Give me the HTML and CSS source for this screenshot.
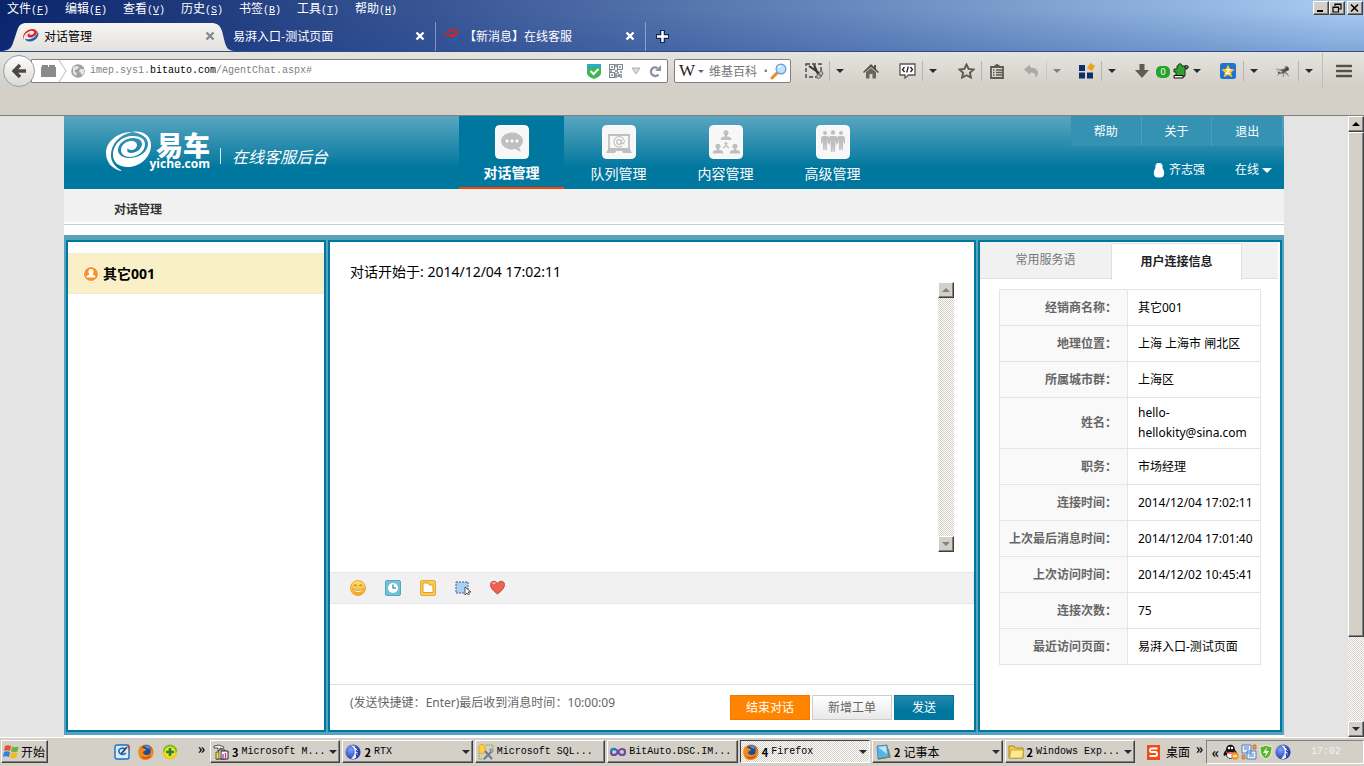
FILE: index.html
```html
<!DOCTYPE html>
<html lang="zh-CN">
<head>
<meta charset="utf-8">
<title>对话管理</title>
<link rel="stylesheet" href="styles.css">
</head>
<body>
<svg class="defs" aria-hidden="true">
  <defs>
    <linearGradient id="gTab" x1="0" y1="0" x2="0" y2="1"><stop offset="0" stop-color="#f6f5f3"/><stop offset="1" stop-color="#e3e1dc"/></linearGradient>
    <linearGradient id="gYel" x1="0" y1="0" x2="0" y2="1"><stop offset="0" stop-color="#ffe27a"/><stop offset="1" stop-color="#f5a91f"/></linearGradient>
    <radialGradient id="gRtx" cx=".35" cy=".35" r=".7"><stop offset="0" stop-color="#7da2f5"/><stop offset="1" stop-color="#1c35a8"/></radialGradient>
    <symbol id="swirl" viewBox="0 0 18 16">
      <path d="M2 13C-1 7 5 1 11 1c4 0 6 3 4 6-2 3-7 4-9 2-1-2 2-5 6-4-3-1-5 1-4 2 1 1 4 0 5-2 0-2-3-3-6-1C3 6 1 9 2 13z" fill="#e02020"/>
      <path d="M3 11c2 2 8 1 11-2 2-2 3-4 2-6 3 3 1 8-3 10-4 2-9 2-10-2z" fill="#1f5fae"/>
    </symbol>
    <symbol id="close" viewBox="0 0 10 10"><path d="M1.5 1.5l7 7M8.500 1.500l-7 7" stroke="currentColor" stroke-width="2.400" fill="none"/></symbol>
    <symbol id="firefox" viewBox="0 0 16 16">
      <circle cx="8" cy="8" r="7.500" fill="#e86a10"/><circle cx="8.500" cy="6.500" r="5.200" fill="#1e4f95"/><path d="M6 2c3-1 6 0 7 3-2-1-3 0-4-1z" fill="#4c9ad8"/>
      <path d="M1 4c0 0 1-1 1-2l2 2c2 0 4 1 4 2l-3 2c0 3 4 4 7 2 1-2 1-4 0-6 3 2 4 6 2 9-3 4-9 4-12 1C0 11 0 7 1 4z" fill="#f08a18"/>
      <path d="M3 12c3 2 7 2 10-1-1 4-7 5-10 1z" fill="#c8330c"/>
    </symbol>
    <symbol id="rtx" viewBox="0 0 16 16"><circle cx="8" cy="8" r="7.600" fill="url(#gRtx)"/><path d="M6 1.500c5 3 5 9 0 13 3 1 4 0 5-1 3-4 2-9-1-11-1-1-3-1-4-1z" fill="#eaf2ff"/><path d="M10 3l3 2-2 2 3 1-3 2 1 3" stroke="#1c35a8" fill="none"/></symbol>
    <symbol id="person" viewBox="0 0 10 10"><circle cx="5" cy="2.500" r="2.300"/><path d="M4 4h2v2c2 0 4 1 4 3H0c0-2 2-3 4-3z"/></symbol>
    <symbol id="stand" viewBox="0 0 8 20"><circle cx="4" cy="2" r="2"/><path d="M1.500 5h5L8 6.500V12l-1 1-.8-4L5.800 19H4.400L4 13l-.4 6H2.200L1.800 9 1 13l-1-1V6.500z"/></symbol>
  </defs>
</svg>

<div class="window">
  <header class="titlebar">
    <nav class="menubar" aria-label="菜单">
      <button class="menu-item">文件<span class="mono">(<u>F</u>)</span></button>
      <button class="menu-item">编辑<span class="mono">(<u>E</u>)</span></button>
      <button class="menu-item">查看<span class="mono">(<u>V</u>)</span></button>
      <button class="menu-item">历史<span class="mono">(<u>S</u>)</span></button>
      <button class="menu-item">书签<span class="mono">(<u>B</u>)</span></button>
      <button class="menu-item">工具<span class="mono">(<u>T</u>)</span></button>
      <button class="menu-item">帮助<span class="mono">(<u>H</u>)</span></button>
      <div class="win-controls">
        <button class="win-btn raised" aria-label="最小化"><svg width="10" height="10" viewBox="0 0 10 10"><path d="M1 8h6" stroke="#000" stroke-width="2"/></svg></button>
        <button class="win-btn raised" aria-label="还原"><svg width="10" height="10" viewBox="0 0 10 10"><path d="M3 3V1h6v5H7M3 1.500h6M1 4h5.500v5H1zM1 4.500h5" fill="none" stroke="#000" stroke-width="1.200"/></svg></button>
        <button class="win-btn raised last" aria-label="关闭"><svg width="10" height="10" viewBox="0 0 10 10"><path d="M1 1.500l7 7M8 1.500l-7 7" stroke="#000" stroke-width="1.600"/></svg></button>
      </div>
    </nav>
    <div class="tabs">
      <div class="tab active">
        <svg class="tab-shape" viewBox="0 0 236 28" preserveAspectRatio="none"><path d="M0 28c8 0 11-2 13-8l4-12c2-6 4-8 10-8h184c6 0 9 2 11 8l3 12c2 6 4 8 11 8z" fill="url(#gTab)"/></svg>
        <svg class="fav" width="17" height="15"><use href="#swirl"/></svg>
        <span class="tab-title">对话管理</span>
        <button class="tab-close" aria-label="关闭标签"><svg width="10" height="10"><use href="#close"/></svg></button>
      </div>
      <div class="tab second">
        <span class="tab-title">易湃入口-测试页面</span>
        <button class="tab-close" aria-label="关闭标签"><svg width="10" height="10"><use href="#close"/></svg></button>
      </div>
      <div class="tab third">
        <svg class="fav" width="17" height="15"><use href="#swirl"/></svg>
        <span class="tab-title">【新消息】在线客服</span>
        <button class="tab-close" aria-label="关闭标签"><svg width="10" height="10"><use href="#close"/></svg></button>
      </div>
      <button class="new-tab" aria-label="新标签"><svg width="13" height="13" viewBox="0 0 13 13"><path d="M6.500 0v13M0 6.500h13" stroke="#13244f" stroke-width="5"/><path d="M6.500 1v11M1 6.500h11" stroke="#fff" stroke-width="2.400"/></svg></button>
    </div>
  </header>

  <div class="toolbar">
    <button class="back" aria-label="后退"><svg width="16" height="16" viewBox="0 0 16 16"><path d="M9 2L3 8l6 6M3 8h12" fill="none" stroke="#4b4a42" stroke-width="3.400"/></svg></button>
    <div class="urlbar">
      <svg width="30" height="22" viewBox="0 0 30 22"><path d="M5 5h6v2H5zM12 5h6v2h-6z" fill="#888"/><path d="M4 7h15v10H4z" fill="#8b8b8b"/><path d="M22 0l7 11-7 11" fill="none" stroke="#c9c9c9" stroke-width="1.200"/></svg>
      <svg class="globe" width="14" height="14" viewBox="0 0 14 14"><circle cx="7" cy="7" r="6.800" fill="#a0a0a0"/><path d="M2 3l4-1 2 1-1 2-3 1v2l2 1-1 3-3-3zM9 5l4 0v4l-2 3-1-3-2-1z" fill="#e4e4e4"/></svg>
      <div class="url" role="textbox" aria-label="地址">imep.sys1.<b>bitauto.com</b>/AgentChat.aspx#</div>
      <svg width="14" height="15" viewBox="0 0 14 15"><path d="M0 0h14v9c0 3-4 5-7 6-3-1-7-3-7-6z" fill="#3fb558"/><path d="M0 0h14v3H0z" fill="#2aa9d6"/><path d="M3.500 7l3 3 5-5" fill="none" stroke="#fff" stroke-width="2"/></svg>
      <svg width="14" height="14" viewBox="0 0 14 14" fill="none" stroke="#7b858f"><path d="M.5.500h5v5h-5zM8.500.500h5v5h-5zM.5 8.500h5v5h-5z" stroke-width="1.200"/><path d="M2 3h2M10 3h2M2 11h2M7 0v3M6 7h3M0 7h3M8 9h2M12 7v2M8 12h3M12 10v4M10 10v2M7 9v5" stroke-width="1.500"/></svg>
      <svg width="10" height="8" viewBox="0 0 10 8"><path d="M1 1h8L5 7z" fill="#d5dade" stroke="#a9b0b8"/></svg>
      <button class="plain" aria-label="刷新"><svg width="12" height="13" viewBox="0 0 12 13"><path d="M9.500 9.500A4.300 4.300 0 1 1 8.500 3" fill="none" stroke="#8b949e" stroke-width="2.400"/><path d="M12 0v6H6z" fill="#8b949e"/></svg></button>
    </div>
    <div class="search">
      <span class="wiki">W</span><i class="tri small"></i>
      <input type="text" aria-label="搜索" placeholder="维基百科 ·">
      <svg width="17" height="17" viewBox="0 0 17 17"><path d="M7 10l-5 5" stroke="#e98a2b" stroke-width="3" stroke-linecap="round"/><circle cx="11" cy="6" r="4.800" fill="#bfe3fb" stroke="#6aa0dc" stroke-width="1.400"/><path d="M8.500 5c0-1 1-2 2.500-2" stroke="#fff" stroke-width="1.400" fill="none"/></svg>
    </div>
    <div class="tools">
      <button class="tool" aria-label="截图"><svg width="19" height="16" viewBox="0 0 19 16"><path d="M1 1h15v13H1z" fill="none" stroke="#444" stroke-width="1.400" stroke-dasharray="4 2"/><path d="M4 3l10 7M9 2l4 9" stroke="#333" stroke-width="2"/><circle cx="16" cy="10.500" r="1.800" fill="#d4d0c8" stroke="#777" stroke-width="1.300"/><circle cx="13.500" cy="13.500" r="1.800" fill="#d4d0c8" stroke="#777" stroke-width="1.300"/></svg></button>
      <button class="drop" aria-label="更多"><i class="tri"></i></button>
      <button class="tool wide" aria-label="主页"><svg width="16" height="15" viewBox="0 0 16 15"><path d="M8 0l3 3V1h2v4l3 3-1 1-7-6-7 6-1-1z" fill="#55534a"/><path d="M3 8l5-4 5 4v6.500H9.500V10h-3v4.500H3z" fill="#69665b"/></svg></button>
      <button class="tool" aria-label="代码"><svg width="17" height="16" viewBox="0 0 17 16"><path d="M1 1h15v11H9.500L6 15v-3H1z" fill="#fff" stroke="#555" stroke-width="1.300"/><path d="M5.500 4L3.500 6.500l2 2.500M11.500 4l2 2.500-2 2.500M9.300 3.500L7.700 9.500" stroke="#222" stroke-width="1.300" fill="none"/></svg></button>
      <button class="drop" aria-label="更多"><i class="tri"></i></button>
      <button class="tool gap-m" aria-label="书签"><svg width="17" height="16" viewBox="0 0 17 16"><path d="M8.500 1.500l2.100 4.400 4.900.6-3.600 3.300 1 4.700-4.400-2.300-4.400 2.300 1-4.700L1.500 6.500l4.900-.6z" fill="none" stroke="#5c5a50" stroke-width="1.900"/></svg></button>
      <button class="tool line" aria-label="列表"><svg width="14" height="15" viewBox="0 0 14 15"><path d="M1 3h12v11H1zM4.500 2.500L7 .8l2.500 1.700" fill="none" stroke="#5c5a50" stroke-width="1.800"/><path d="M3 6h1.500M6 6h6M3 8.500h1.500M6 8.500h6M3 11h1.500M6 11h6" stroke="#5c5a50" stroke-width="1.300"/></svg></button>
      <button class="tool gap-s" aria-label="撤销"><svg width="15" height="14" viewBox="0 0 15 14"><path d="M0 5.500L6 .500v3c6 0 8 3 8 5.500 0 2-1 4-3 4.500 1-2 1-5-5-5v2.500z" fill="#a9a9a6"/></svg></button>
      <button class="drop dim" aria-label="更多"><i class="tri"></i></button>
      <button class="tool gap-s" aria-label="应用"><svg width="17" height="16" viewBox="0 0 17 16"><path d="M1 2h6v6H1zM1 9.500h6v6H1zM9 9.500h6v6H9z" fill="#0c2f6d"/><path d="M12.500 0L17 3l-3 5-5-3z" fill="#f5a012"/></svg></button>
      <button class="drop" aria-label="更多"><i class="tri"></i></button>
      <button class="tool gap-m slim" aria-label="下载"><svg width="14" height="14" viewBox="0 0 14 14"><path d="M4.500 0h5v6H14l-7 8-7-8h4.500z" fill="#5f5d53"/></svg></button>
      <span class="zero">0</span>
      <button class="tool puzzle" aria-label="扩展"><svg width="16" height="16" viewBox="0 0 16 16"><path d="M5 3c0-3 4-3 4 0h5v3h-2v7c-3 2-7 2-9 0V9H1V6h3V3z" fill="#2fa12f" stroke="#123b12"/><path d="M1 12.500h9v2.500H1zM12 3h3v2h-3z" fill="#fff" stroke="#000"/></svg></button>
      <button class="drop bare" aria-label="更多"><i class="tri"></i></button>
      <button class="tool gap-m" aria-label="收藏"><svg width="16" height="16" viewBox="0 0 16 16"><rect width="16" height="16" rx="2.500" fill="#1d74d3"/><path d="M8 1.500l2 4.300 4.600.6-3.400 3.200.9 4.600L8 12l-4.100 2.200.9-4.600L1.400 6.400 6 5.800z" fill="#ffc72c"/><path d="M6 6.500h4l-4 4h4" stroke="#fff" fill="none" stroke-width="1.200"/></svg></button>
      <button class="drop" aria-label="更多"><i class="tri"></i></button>
      <button class="tool gap-s" aria-label="调试"><svg width="16" height="13" viewBox="0 0 16 13"><path d="M1 4l7 1 3-4 2 1M2 11l4-4M8 12l1-4M13 9l-3-2M14 11l-4-3" stroke="#888" fill="none"/><ellipse cx="7" cy="6.500" rx="4.500" ry="2" fill="#555" transform="rotate(-15 7 6)"/><circle cx="12" cy="4" r="2" fill="#444"/><path d="M2 5l5 2" stroke="#bbb" stroke-width="2"/></svg></button>
      <button class="drop" aria-label="更多"><i class="tri"></i></button>
      <button class="tool burger" aria-label="菜单"><svg width="16" height="14" viewBox="0 0 16 14"><path d="M1 2h14M1 7h14M1 12h14" stroke="#55524a" stroke-width="2.600" stroke-linecap="round"/></svg></button>
    </div>
  </div>

  <div class="viewport">
    <div class="page">
      <div class="site-head">
        <div class="brand">
          <svg width="47" height="41" viewBox="0 0 47 41" aria-hidden="true">
            <path d="M27 1C12 1 1 11 1 22c0 9 6 16 15 18l.3-.8C10 36 6 31 6 24 6 13 14 4 27 1z" fill="#fff"/>
            <path fill="#fff" fill-rule="evenodd" d="M27 1c11-2 19 4 19 13 0 12-11 22-23 22C13 36 8 31 8 24 8 13 17 5 28 5c7 0 12 3 12 8 0 8-8 13-15 13-6 0-9-3-9-7 0-5 5-9 10-9 4 0 6 2 6 4 0 3-3 5-6 5-2 0-3-1-3-2-2 3 0 5 3 5 5 0 11-4 11-9 0-4-4-6-9-6-8 0-15 6-15 12 0 4 4 8 11 8 10 0 19-6 19-14 0-6-6-11-16-12z"/>
          </svg>
          <div class="wordmark"><strong>易车</strong><span>yiche.com</span></div>
          <span class="brand-line"></span>
          <em class="brand-sub">在线客服后台</em>
        </div>
        <nav class="main-nav">
          <a class="nav-item on" href="#"><svg width="34" height="34" viewBox="0 0 34 34"><rect x=".5" y=".5" width="33" height="33" rx="4" fill="#f7f7f7" stroke="#fff"/><ellipse cx="17" cy="16" rx="11" ry="8.500" fill="#bfbfbf"/><path d="M18 23l8 4-2-5z" fill="#bfbfbf"/><g fill="#fff"><circle cx="12" cy="16" r="1.500"/><circle cx="17" cy="16" r="1.500"/><circle cx="22" cy="16" r="1.500"/></g></svg><span>对话管理</span></a>
          <a class="nav-item" href="#"><svg width="34" height="34" viewBox="0 0 34 34"><rect x=".5" y=".5" width="33" height="33" rx="4" fill="#f7f7f7" stroke="#fff"/><path d="M7 10h20v14H7z" fill="none" stroke="#bfbfbf" stroke-width="1.800"/><path d="M7 23h20l3 5H4z" fill="#bfbfbf"/><path d="M14 26h6l1 2h-8z" fill="#f7f7f7"/><circle cx="17" cy="17" r="2.300" fill="none" stroke="#bfbfbf" stroke-width="1.200"/><path d="M19.300 15v3c1 2 3 0 3-1.500a5.200 5.200 0 1 0-2.500 4.700" fill="none" stroke="#bfbfbf" stroke-width="1.100"/></svg><span>队列管理</span></a>
          <a class="nav-item" href="#"><svg width="34" height="34" viewBox="0 0 34 34"><rect x=".5" y=".5" width="33" height="33" rx="4" fill="#f7f7f7" stroke="#fff"/><g fill="#bfbfbf"><use href="#person" x="11.500" y="5" width="11" height="11"/><use href="#person" x="3.500" y="18.500" width="11" height="11"/><use href="#person" x="20.500" y="18.500" width="11" height="11"/></g><path d="M17 17v4M17 20.500l-3 2.500M17 20.500l3 2.500M15.500 18.500h3" stroke="#bfbfbf" stroke-width="1.300"/></svg><span>内容管理</span></a>
          <a class="nav-item" href="#"><svg width="34" height="34" viewBox="0 0 34 34"><rect x=".5" y=".5" width="33" height="33" rx="4" fill="#f7f7f7" stroke="#fff"/><g fill="#bfbfbf"><use href="#stand" x="5" y="6" width="8" height="20"/><use href="#stand" x="21" y="6" width="8" height="20"/><use href="#stand" x="12.500" y="5" width="9" height="23"/></g></svg><span>高级管理</span></a>
        </nav>
        <div class="account">
          <div class="links"><a href="#">帮助</a><a href="#">关于</a><a href="#">退出</a></div>
          <div class="user">
            <svg width="12" height="15" viewBox="0 0 12 15"><path d="M6 0c3 0 4 2 3.500 5C11 7 12 10 10.500 13c-1 2-8 2-9 0C0 10 1 7 2.500 5 2 2 3 0 6 0z" fill="#fff"/></svg>
            <span>齐志强</span>
            <button class="status">在线<i class="tri white"></i></button>
          </div>
        </div>
      </div>
      <div class="subnav"><a href="#">对话管理</a></div>

      <main class="panels">
        <section class="panel people">
          <button class="contact"><svg width="18" height="18" viewBox="0 0 18 18"><circle cx="9" cy="9" r="8.500" fill="#fff" stroke="#f0dfc0"/><circle cx="9" cy="9" r="7" fill="#ff8f1f"/><path d="M9 4c2 0 3 1.500 2.500 3.500-.3 1-.8 1.500-1 2 2 .5 3 1 3 3h-9c0-2 1-2.500 3-3-.2-.500-.700-1-1-2C6 5.500 7 4 9 4z" fill="#fff"/></svg>其它001</button>
        </section>

        <section class="panel chat">
          <div class="log">
            <p>对话开始于: 2014/12/04 17:02:11</p>
            <div class="scroll inner" aria-hidden="true"><span class="sbtn raised"><i class="tri up dimtri"></i></span><span class="sbtn raised"><i class="tri dimtri"></i></span></div>
          </div>
          <div class="chat-tools">
            <button class="plain" aria-label="表情"><svg width="16" height="16" viewBox="0 0 16 16"><circle cx="8" cy="8" r="7.500" fill="url(#gYel)" stroke="#eda52b"/><path d="M2.500 8.500c1 5.500 10 5.500 11 0-2.500 3-8.500 3-11 0z" fill="#fff" stroke="#d88a1c" stroke-width=".7"/><path d="M4 6c.5-1.500 2-1.500 2.500 0M9.500 6c.5-1.500 2-1.500 2.500 0" stroke="#a8661a" fill="none"/></svg></button>
            <button class="plain" aria-label="历史"><svg width="16" height="16" viewBox="0 0 16 16"><rect x=".5" y=".5" width="15" height="15" rx="1.500" fill="#75bfd8" stroke="#4ea7c6"/><circle cx="8" cy="8" r="5" fill="#fff"/><path d="M8 4.500V8h3" stroke="#4aa0c0" stroke-width="1.500" fill="none"/></svg></button>
            <button class="plain" aria-label="文件"><svg width="16" height="16" viewBox="0 0 16 16"><rect x=".5" y=".5" width="15" height="15" rx="1.500" fill="#f9cb55" stroke="#e3ab33"/><path d="M3 3h5l1.500 2H13v7.500H3z" fill="#fff" stroke="#d99f2b"/></svg></button>
            <button class="plain" aria-label="截屏"><svg width="16" height="16" viewBox="0 0 16 16"><rect x="1" y="2" width="12" height="11" fill="#a9d0f1" stroke="#44617c" stroke-dasharray="2 1"/><path d="M10 7v8l2-2 1.500 2 1-1-1.500-2h3z" fill="#fff" stroke="#333" stroke-width=".8"/></svg></button>
            <button class="plain" aria-label="满意度"><svg width="16" height="16" viewBox="0 0 16 16"><path d="M7.500 14C3.500 11 .500 8 .500 4.500.500 1 5.500 0 7.500 3.500 9.500 0 14.500 1 14.500 4.500 14.500 8 11.500 11 7.500 14z" fill="#ee6256" stroke="#b94b42"/><path d="M2.500 4c.5-1 2-1.500 3-.5" stroke="#ffb3ab" stroke-width="1.500" fill="none"/></svg></button>
          </div>
          <textarea class="compose" aria-label="消息内容"></textarea>
          <div class="chat-foot">
            <span>(发送快捷键<span class="colon">：</span>Enter)最后收到消息时间<span class="colon">：</span>10:00:09</span>
            <div class="actions"><button class="btn end">结束对话</button><button class="btn order">新增工单</button><button class="btn send">发送</button></div>
          </div>
        </section>

        <section class="panel info">
          <div class="info-tabs"><button class="info-tab">常用服务语</button><button class="info-tab on">用户连接信息</button><span class="rest"></span></div>
          <table class="details">
            <tr><th scope="row">经销商名称<span class="colon">：</span></th><td>其它001</td></tr>
            <tr><th scope="row">地理位置<span class="colon">：</span></th><td>上海 上海市 闸北区</td></tr>
            <tr><th scope="row">所属城市群<span class="colon">：</span></th><td>上海区</td></tr>
            <tr><th scope="row">姓名<span class="colon">：</span></th><td>hello-<br>hellokity@sina.com</td></tr>
            <tr><th scope="row">职务<span class="colon">：</span></th><td>市场经理</td></tr>
            <tr><th scope="row">连接时间<span class="colon">：</span></th><td>2014/12/04 17:02:11</td></tr>
            <tr><th scope="row">上次最后消息时间<span class="colon">：</span></th><td>2014/12/04 17:01:40</td></tr>
            <tr><th scope="row">上次访问时间<span class="colon">：</span></th><td>2014/12/02 10:45:41</td></tr>
            <tr><th scope="row">连接次数<span class="colon">：</span></th><td>75</td></tr>
            <tr><th scope="row">最近访问页面<span class="colon">：</span></th><td>易湃入口-测试页面</td></tr>
          </table>
        </section>
      </main>
    </div>
    <div class="scroll" aria-hidden="true"><span class="sbtn raised"><i class="tri up"></i></span><span class="thumb raised"></span><span class="sbtn raised"><i class="tri"></i></span></div>
  </div>

  <footer class="taskbar">
    <button class="start raised"><svg width="17" height="16" viewBox="0 0 17 16"><path d="M2 2c2-1 4-1 6 0L7 7C5 6 3 6 1 7z" fill="#e8522a"/><path d="M9 2.500c2 1 4 1 6.500 0l-1 5c-2 1-4 1-6.500 0z" fill="#6cb33f"/><path d="M1 8c2-1 4-1 6 0l-1 5c-2-1-4-1-6 0z" fill="#3b7fdc"/><path d="M8 8.500c2 1 4 1 6.500 0l-1 5c-2 1-4 1-6.500 0z" fill="#f7b916"/></svg>开始</button>
    <div class="quick">
      <svg width="16" height="16" viewBox="0 0 16 16"><rect x="1" y="1" width="14" height="14" rx="2" fill="#d8ecfb" stroke="#1d6fb8" stroke-width="1.400"/><path d="M11 5c-3-2-7 0-6 3s5 3 7 1" fill="none" stroke="#1d6fb8" stroke-width="1.600"/><path d="M7 10l6-7" stroke="#345" stroke-width="1.800"/><path d="M14 2l2 3" stroke="#e33" stroke-width="2"/></svg>
      <svg width="16" height="16"><use href="#firefox"/></svg>
      <svg width="16" height="16" viewBox="0 0 16 16"><circle cx="8" cy="8" r="7.500" fill="#f2c91c"/><path d="M1 7C2 2 6 0 10 1c3 1 5 3 5 6-3 6-8 5-14 0z" fill="#68bd2c"/><circle cx="8" cy="8" r="5.500" fill="#f4de37"/><path d="M8 4v8M4 8h8" stroke="#25852b" stroke-width="2.600"/></svg>
    </div>
    <span class="more">»</span>
    <div class="tasks">
      <button class="task raised"><svg width="16" height="16" viewBox="0 0 16 16"><path d="M1 2l5-1 5 2-1 2-3-1v3H5V4H1z" fill="#eee" stroke="#333" stroke-width=".8"/><path d="M6 6h6v9H3l2-4z" fill="#fff" stroke="#333"/><path d="M3 8h3v7H3z" fill="#f4e01c" stroke="#333" stroke-width=".7"/><path d="M8 7h7v8H8z" fill="#fff" stroke="#222"/><path d="M10 10v5M12.500 9v6" stroke="#c39" stroke-width="1.400"/></svg><b>3</b><span class="mono">Microsoft M...</span><i class="tri"></i></button>
      <button class="task raised"><svg width="16" height="16"><use href="#rtx"/></svg><b>2</b><span class="mono">RTX</span><i class="tri"></i></button>
      <button class="task raised"><svg width="16" height="16" viewBox="0 0 16 16"><path d="M8 1h7v5M1 9v6h6" fill="none" stroke="#55b630" stroke-dasharray="1.500 1"/><path d="M1 2c1-2 5-2 6 0v6c-1 2-5 2-6 0z" fill="#ffd23d" stroke="#d59a12" stroke-width=".7"/><path d="M6 15l8-8M7 7l7 8" stroke="#747b85" stroke-width="2"/><path d="M12 5l3 3" stroke="#999" stroke-width="3"/></svg><span class="mono">Microsoft SQL...</span></button>
      <button class="task raised"><svg width="16" height="16" viewBox="0 0 16 16"><path d="M8 8C6 4 1 4 1 8s5 4 7 0 7-4 7 0-5 4-7 0z" fill="none" stroke="#6a4ba8" stroke-width="2.200"/><path d="M1 8c0-3 3-4 5-2" fill="none" stroke="#2680b8" stroke-width="2.200"/></svg><span class="mono">BitAuto.DSC.IM...</span></button>
      <button class="task pressed"><svg width="16" height="16"><use href="#firefox"/></svg><b>4</b><span class="mono">Firefox</span><i class="tri"></i></button>
      <button class="task raised"><svg width="16" height="16" viewBox="0 0 16 16"><path d="M2 2l10-1 2 12-11 2z" fill="#55b4ea" stroke="#3f7da8" stroke-width=".8"/><path d="M3 3l8-1 1 8z" fill="#bfe4fa"/><path d="M13 5l2 8-12 2" fill="none" stroke="#6d8a55" stroke-width="1.400"/></svg><b>2</b><span>记事本</span><i class="tri"></i></button>
      <button class="task raised"><svg width="16" height="16" viewBox="0 0 16 16"><path d="M1 2h5l1.500 2H15v10H1z" fill="#f4c944" stroke="#a9861c"/><path d="M3 6h12.500l-1 8H1.500z" fill="#ffe98e" stroke="#b7942a" stroke-width=".7"/></svg><b>2</b><span class="mono">Windows Exp...</span><i class="tri"></i></button>
    </div>
    <div class="desk"><svg width="13" height="15" viewBox="0 0 13 15"><rect width="13" height="15" fill="#f04c13"/><path d="M10.500 3.500H4.500c-2 0-2 3.500 0 3.500h4c2 0 2 4 0 4H2.500" fill="none" stroke="#fff" stroke-width="1.800"/></svg>桌面</div>
    <span class="more">»</span>
    <div class="tray">
      <span class="more">«</span>
      <svg width="16" height="16" viewBox="0 0 16 16"><path d="M3 6c0-7 9-7 9 0 2 2 3 4 2 6l-2-1c-1 5-8 5-9 0l-2 1c-1-2 0-4 2-6z" fill="#161616"/><ellipse cx="7.500" cy="11" rx="3.500" ry="3" fill="#fff"/><circle cx="6" cy="4" r="1.200" fill="#fff"/><circle cx="9" cy="4" r="1.200" fill="#fff"/><path d="M3 7c3 2 6 2 9 0v2c-3 1-6 1-9 0z" fill="#e02b20"/><circle cx="12" cy="12" r="3.800" fill="#f0962b"/><path d="M10 12h4" stroke="#fff" stroke-width="1.500"/></svg>
      <svg width="16" height="16" viewBox="0 0 16 16"><path d="M1 1h9v8H1zM6 7h9v8H6z" fill="#e9f2fc" stroke="#4a7fc1"/><path d="M12 1h3v4h-3zM1 11h3v4H1z" fill="#e9a33a" stroke="#b33" stroke-width=".5"/><path d="M3 3h5M3 5h5M8 10h5M8 12h5" stroke="#4a7fc1"/></svg>
      <svg width="14" height="16" viewBox="0 0 14 16"><path d="M7 1c2 1 4 1.500 6 1.500 0 6-1 10-6 12.500C2 12.500 1 8.500 1 2.500 3 2.500 5 2 7 1z" fill="#59b52a" stroke="#e8f5dd"/><path d="M8 3L4 9h3l-1 4 4-6H7z" fill="#fff"/></svg>
      <svg width="16" height="16"><use href="#rtx"/></svg>
      <time class="mono">17:02</time>
    </div>
  </footer>
</div>
</body>
</html>
```
FILE: styles.css
```css
* { box-sizing: border-box; }
body { margin: 0; font: 12px/16px "Noto Sans", "Noto Sans CJK SC", sans-serif; color: #000; background: #e4e4e4; }
button { font: inherit; color: inherit; border: 0; padding: 0; margin: 0; background: none; }
a { color: inherit; text-decoration: none; }
svg { display: block; flex: none; }
.defs { position: absolute; width: 0; height: 0; }
.mono { font-family: "Liberation Mono", "Noto Sans CJK SC", monospace; font-size: 10px; }
.colon { font-family: "Noto Sans CJK TC", sans-serif; line-height: 1; }
.window { display: flex; flex-direction: column; height: 100vh; }
.raised { background: #d4d0c8; border: 1px solid; border-color: #fff #404040 #404040 #fff; box-shadow: inset -1px -1px #808080; }
.tri { border: solid transparent; border-width: 4px 4px 0; border-top-color: #222c38; width: 0; height: 0; flex: none; }
.tri.small { border-width: 3px 3px 0; border-top-color: #666; }
.tri.up { border-width: 0 4px 4px; border-bottom-color: #000; }
.tri.white { border-width: 5px 5px 0; border-top-color: #fff; margin-left: 3px; }

/* browser title and tabs */
.titlebar { height: 52px; flex: none; color: #fff; border-bottom: 1px solid #2f4c85; font-family: "Noto Sans CJK SC", sans-serif;
  background: linear-gradient(to bottom, transparent 10px, rgba(25, 60, 150, .25)), linear-gradient(to right, #0a246a, #3a5896 33%, #6d8fc2 66%, #8fb3de 86%, #a6caf0 98%); }
.menubar { display: flex; height: 22px; padding-left: 7px; gap: 16px; line-height: 15px; }
.menu-item { width: 42px; height: 15px; white-space: nowrap; text-align: left; }
.win-controls { margin-left: auto; display: flex; padding-top: 1px; }
.win-btn { width: 16px; height: 14px; padding: 1px 2px; color: #000; }
.win-btn.last { margin: 0 1px 0 2px; }
.tabs { display: flex; height: 29px; }
.tab { display: flex; align-items: center; position: relative; width: 210px; padding: 0 10px 2px 0; }
.tab-title { flex: 1; position: relative; white-space: nowrap; }
.tab-close { width: 10px; position: relative; color: #fff; }
.fav { position: relative; margin-right: 5px; }
.tab.active { width: 225px; padding-left: 22px; color: #000; }
.tab.active .tab-close { color: #86898c; }
.tab-shape { position: absolute; left: 0; bottom: 0; width: 236px; height: 28px; }
.tab.second { padding-left: 8px; border-right: 1px solid #8394b5; width: 211px; }
.tab.third { padding-left: 7px; border-right: 1px solid #8fa0c0; }
.tab.third .fav { margin-right: 4px; }
.new-tab { width: 32px; display: grid; place-items: center; }

/* toolbar */
.toolbar { height: 64px; flex: none; display: flex; align-items: flex-start; padding-top: 7px; border-bottom: 1px solid #808080;
  background: linear-gradient(#e6e4df, #d4d0c8 34px); }
.back { width: 32px; height: 32px; margin: -4px 0 0 3px; border: 1px solid #8ca0b4; border-radius: 50%; background: linear-gradient(#fdfdfc, #dcdad5); display: grid; place-items: center; position: relative; z-index: 1; }
.urlbar { flex: 1; height: 24px; margin: 0 6px 0 -4px; padding: 0 6px 0 5px; border: 1px solid #808080; border-radius: 0 2px 2px 0; background: #fff; display: flex; align-items: center; gap: 8px; }
.urlbar > svg:first-child { margin-right: -4px; }
.globe { margin-right: -3px; }
.url { flex: 1; font: 10px/22px "Liberation Mono", monospace; color: #808080; white-space: nowrap; }
.url b { font-weight: 400; color: #000; }
.search { width: 117px; height: 24px; border: 1px solid #808080; border-radius: 2px; background: #fff; display: flex; align-items: center; padding: 0 3px 0 4px; gap: 3px; }
.search input { flex: 1; min-width: 0; border: 0; padding: 0 0 0 2px; background: none; font: 12px/20px "Noto Sans CJK SC", sans-serif; }
.search input::placeholder { color: #777; }
.wiki { font: 17px/22px "Liberation Serif", serif; color: #222; }
.tools { display: flex; padding-left: 8px; }
.tool { width: 30px; height: 24px; display: grid; place-items: center; flex: none; }
.tool.wide { width: 43px; }
.tool.slim { width: 24px; }
.tool.puzzle { width: 17px; }
.tool.line { border-left: 1px solid #b4b5b5; height: 20px; margin-top: 2px; }
.drop { width: 20px; height: 20px; margin-top: 2px; border-left: 1px solid #b4b5b5; display: grid; place-items: center; flex: none; }
.drop.bare { width: 15px; border: 0; }
.drop.dim { opacity: .5; }
.gap-s { margin-left: 5px; }
.gap-m { margin-left: 9px; }
.burger { width: 42px; border-left: 1px solid #c0bdb6; height: 36px; margin: -6px 0 0 4px; }
.zero { width: 14px; height: 12px; margin: 7px 2px 0; border-radius: 5px; background: #26a32b; color: #fff; font: 9px/12px "Noto Sans", sans-serif; text-align: center; }

/* page */
.viewport { flex: 1; min-height: 0; display: flex; background: #e4e4e4; border-bottom: 1px solid #fff; }
.page { flex: 1; margin: 0 64px; background: #fff; display: flex; flex-direction: column; padding-bottom: 2px; }
.scroll { width: 16px; display: flex; flex-direction: column; background: repeating-conic-gradient(#fff 0 25%, #d4d0c8 0 50%) 0 0 / 2px 2px; }
.sbtn { height: 16px; flex: none; display: grid; place-items: center; }
.sbtn:last-child { margin-top: auto; }
.thumb { height: 505px; flex: 0 1 auto; }
.site-head { height: 73px; flex: none; display: flex; color: #fff; background: linear-gradient(#5ba6c0, #00779e 52px); }
.brand { width: 395px; flex: none; padding: 15px 0 0 41px; display: flex; align-items: flex-start; }
.wordmark { width: 58px; display: flex; flex-direction: column; align-items: flex-end; white-space: nowrap; }
.wordmark strong { font: 900 27px/27px "Noto Sans CJK SC", sans-serif; }
.wordmark span { font: 700 12px/12px "Open Sans", sans-serif; }
.brand-line { width: 1px; height: 16px; margin: 17px 11px 0 10px; background: #d5eaf1; }
.brand-sub { font: italic 16px/24px "Noto Sans CJK SC", sans-serif; padding-top: 13px; }
.main-nav { display: flex; gap: 2px; flex: 1; }
.nav-item { width: 105px; display: flex; flex-direction: column; align-items: center; padding-top: 9px; font-size: 14px; line-height: 20px; gap: 5px; }
.nav-item.on { background: #00779e; border-bottom: 2px solid #ff4200; font-weight: 700; gap: 4px; }
.account { width: 213px; flex: none; }
.links { display: flex; padding-right: 1px; }
.links a { flex: 1; height: 30px; line-height: 32px; text-align: center; background: #3592b3; border-right: 1px solid #4c9fbc; }
.user { display: flex; align-items: center; padding: 16px 12px 0 82px; }
.user span { margin-left: 4px; }
.status { margin-left: auto; display: flex; align-items: center; }
.subnav { height: 36px; flex: none; margin-bottom: 10px; padding: 13px 50px 0; font-weight: 700; color: #333; border-bottom: 1px solid #ccc; background: linear-gradient(#f1f1f1 33px, #fff 33px); }
.panels { flex: 1; min-height: 0; display: flex; gap: 2px; padding: 5px 2px 3px; background: #57a3bd; }
.panel { border: 2px solid #00779e; background: #fff; }
.people { width: 260px; flex: none; padding-top: 11px; }
.contact { width: 100%; height: 41px; display: flex; align-items: center; gap: 3px; padding-left: 14px; background: #faf0c8; font-weight: 700; font-size: 14px; border-top: 1px solid #f7edcd; border-bottom: 1px solid #eee9dc; }
.chat { flex: 1; min-width: 0; display: flex; flex-direction: column; }
.log { flex: 1; min-height: 0; display: flex; flex-direction: column; padding: 20px; font-size: 14px; line-height: 20px; }
.log p { margin: 0; }
.inner { flex: 1; align-self: flex-end; }
.dimtri { border-top-color: #808080; }
.tri.up.dimtri { border-bottom-color: #808080; border-top-color: transparent; }
.chat-tools { height: 32px; flex: none; display: flex; align-items: center; gap: 19px; padding-left: 20px; background: #f1f1f1; border: 1px solid #e5e5e5; border-left: 0; }
.compose { height: 80px; flex: none; border: 0; resize: none; outline: 0; padding: 8px 20px; font: inherit; }
.chat-foot { height: 46px; flex: none; display: flex; justify-content: space-between; padding: 10px 20px 0; border-top: 1px solid #e0e0e0; color: #666; }
.actions { display: flex; gap: 2px; }
.btn { width: 80px; height: 25px; border: 1px solid; }
.btn.end { background: #ff8500; border-color: #f97700; color: #fff; }
.btn.order { background: linear-gradient(#fff, #e9e9e9); border-color: #ccc; }
.btn.send { width: 60px; background: linear-gradient(#2489ac, #00779e 60%); border-color: #00779e; color: #fff; }
.info { width: 304px; flex: none; }
.info-tabs { display: flex; height: 38px; padding-right: 2px; }
.info-tab { width: 131px; height: 37px; background: #f1f1f1; border-bottom: 1px solid #e0e0e0; color: #777; }
.info-tab.on { margin-top: 1px; background: #fff; border: 1px solid #e0e0e0; border-bottom: 0; color: #222; font-weight: 700; }
.rest { flex: 1; height: 37px; background: #f1f1f1; border-bottom: 1px solid #e0e0e0; }
.details { width: 262px; margin: 9px 0 0 19px; border-collapse: collapse; line-height: 20px; }
.details th, .details td { border: 1px solid #e5e5e5; height: 36px; padding: 5px 0 5px 10px; }
.details th { width: 128px; padding: 0 10px 0 0; text-align: right; background: #f9f9f9; color: #666; white-space: nowrap; }
.details td { white-space: nowrap; }

/* taskbar */
.taskbar { height: 28px; flex: none; display: flex; padding: 2px 0 2px 1px; background: #d4d0c8; font-family: "Noto Sans CJK SC", sans-serif; }
.start { width: 47px; height: 23px; display: flex; align-items: center; gap: 1px; padding-left: 1px; white-space: nowrap; }
.quick { display: flex; align-items: center; gap: 8px; margin-left: 66px; }
.more { width: 11px; font-size: 14px; font-weight: 700; line-height: 16px; text-align: center; }
.quick + .more { margin: 0 3px 0 18px; }
.tasks { flex: 1; display: flex; gap: 2px; min-width: 0; }
.task { flex: 1; min-width: 0; height: 23px; display: flex; align-items: center; gap: 3px; padding: 0 2px; white-space: nowrap; text-align: left; }
.task b { font-size: 11px; }
.task > span { flex: 1; }
.pressed { border: 1px solid; border-color: #404040 #fff #fff #404040; background: repeating-conic-gradient(#fff 0 25%, #d4d0c8 0 50%) 0 0 / 2px 2px; }
.desk { display: flex; align-items: center; gap: 6px; margin: 0 4px 0 12px; }
.tray { width: 158px; margin-left: 1px; display: flex; align-items: center; gap: 2px; padding-left: 3px; border: 1px solid; border-color: #808080 #fff #fff #808080; }
.tray time { margin-left: 18px; color: #f4f2ee; }
```
